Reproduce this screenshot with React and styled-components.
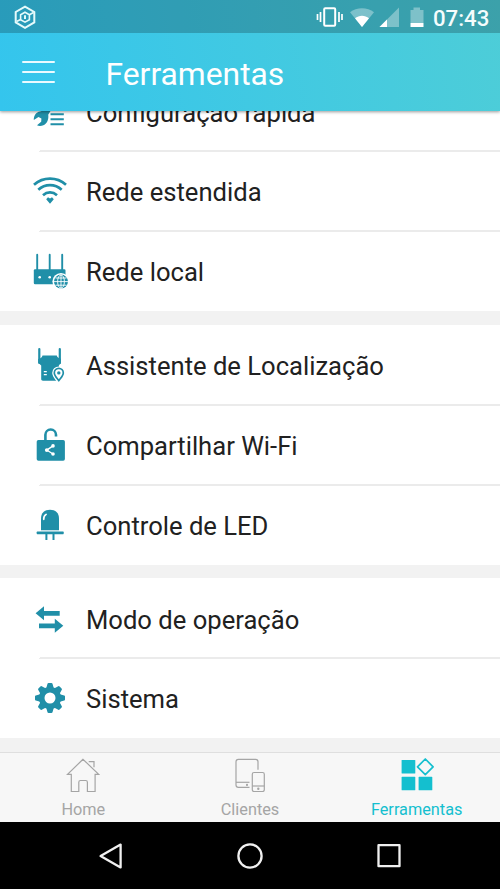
import styled, { createGlobalStyle } from "styled-components"

const groups = [
  [
    { label: "Configuração rápida", Icon: SetupIcon },
    { label: "Rede estendida", Icon: WifiIcon },
    { label: "Rede local", Icon: RouterIcon },
  ],
  [
    { label: "Assistente de Localização", Icon: LocationIcon },
    { label: "Compartilhar Wi-Fi", Icon: ShareIcon },
    { label: "Controle de LED", Icon: LedIcon },
  ],
  [
    { label: "Modo de operação", Icon: ModeIcon },
    { label: "Sistema", Icon: GearIcon },
  ],
]

const tabs = [
  { label: "Home", Icon: HomeIcon },
  { label: "Clientes", Icon: ClientsIcon },
  { label: "Ferramentas", Icon: ToolsIcon, active: true },
]

function App() {
  return (
    <Screen>
      <GlobalStyle />
      <TopArea>
        <StatusBar>
          <AppBadge />
          <StatusIcons />
          <Clock>07:43</Clock>
        </StatusBar>
        <Header>
          <MenuButton aria-label="Menu">
            <span />
            <span />
            <span />
          </MenuButton>
          <Title>Ferramentas</Title>
        </Header>
      </TopArea>

      <List>
        {groups.map((rows) => (
          <Group key={rows[0].label}>
            {rows.map(({ label, Icon }) => (
              <Row key={label}>
                <Icon />
                <RowLabel>{label}</RowLabel>
              </Row>
            ))}
          </Group>
        ))}
      </List>

      <TabBar>
        {tabs.map(({ label, Icon, active }) => (
          <Tab key={label} $active={active}>
            <Icon />
            <TabLabel>{label}</TabLabel>
          </Tab>
        ))}
      </TabBar>

      <NavBar>
        <NavButton aria-label="Voltar">
          <svg width="28" height="28" viewBox="0 0 28 28">
            <path d="M23.6 2.6v22.8L3.6 14z" />
          </svg>
        </NavButton>
        <NavButton aria-label="Início">
          <svg width="28" height="28" viewBox="0 0 28 28">
            <circle cx="14" cy="14" r="11.6" />
          </svg>
        </NavButton>
        <NavButton aria-label="Recentes">
          <svg width="28" height="28" viewBox="0 0 28 28">
            <rect x="3.5" y="3.2" width="21" height="21" />
          </svg>
        </NavButton>
      </NavBar>
    </Screen>
  )
}

function AppBadge() {
  return (
    <svg width="24" height="26" viewBox="0 0 24 26" fill="none" stroke="#e6fafb">
      <path d="M12 2.600 21.300 8v10.400L12 23.800 2.700 18.400V8z" strokeWidth="2" />
      <path d="M12 8.200 16.400 10.700v5L12 18.200l-4.400-2.500v-5z" strokeWidth="1.600" />
      <path d="M3.500 17.500 7.600 15.500M16.400 10.700l4.100-2.200" strokeWidth="1.600" />
      <path d="M12 11.300v3.800" strokeWidth="2" />
    </svg>
  )
}

function StatusIcons() {
  return (
    <StatusSvg width="112" height="24" viewBox="0 0 112 24">
      {/* vibrate */}
      <rect x="8.2" y="3.3" width="11" height="17.4" rx="1" fill="none" stroke="#fff" strokeWidth="2" />
      <path d="M1.500 9v6M4.500 7v10M23 7v10M26 9v6" stroke="#fff" strokeWidth="1.700" />
      {/* wifi */}
      <path d="M34 7.300C40.500 2 51.500 2 58 7.300L46 22z" fill="#fff" opacity=".35" />
      <path d="M39 13.200c4-3.400 10-3.400 14 0L46 22z" fill="#fff" />
      {/* signal */}
      <path d="M83 2.500V22H63.500z" fill="#fff" opacity=".35" />
      <path d="M71 14.500V22h-7.500z" fill="#fff" />
      {/* battery */}
      <path d="M94.500 5h3V2.500h6.500V5h3.500v13h-13z" fill="#fff" opacity=".35" />
      <path d="M94.500 18h13v4h-13z" fill="#fff" />
    </StatusSvg>
  )
}

function SetupIcon() {
  return (
    <RowSvg viewBox="0 0 40 40">
      <path d="M10 20.500 15 19 20 10l4.500 3.500-6.300 10.200c1 6-2.500 11.300-8.200 11.300-1.200 0-2.200-.3-3-.8l4.200-3.400.2-3.400-2.900-1.300-4.700 2.900C3.700 24.500 6 21.200 10 20.500z" />
      <path d="M20.500 23.300h13.300M20.500 28.300h13.300M20.500 33.200h13.300" stroke="currentColor" strokeWidth="2" />
    </RowSvg>
  )
}

function WifiIcon() {
  return (
    <RowSvg viewBox="0 0 40 40">
      <g fill="none" stroke="currentColor" strokeWidth="2.7">
        <path d="M4 13.700c9.200-8.200 22.800-8.200 32 0" />
        <path d="M8.300 18.700c6.700-6.100 16.700-6.100 23.400 0" />
        <path d="M13 24.200c4.200-3.700 9.800-3.700 14 0" />
      </g>
      <path d="M16.200 28.300 18 26.200l2 1.300 2-1.300 1.800 2.100L20 32.700z" />
    </RowSvg>
  )
}

function RouterIcon() {
  return (
    <RowSvg viewBox="0 0 40 40">
      <path d="M7.200 3.700V20M19.700 3.700V20M32.200 3.700V20" stroke="currentColor" strokeWidth="1.9" strokeLinecap="round" />
      <rect x="3.8" y="18.200" width="31.700" height="15" rx="1.300" />
      <circle cx="9.700" cy="26.200" r="1.300" fill="#fff" />
      <circle cx="19.700" cy="26.200" r="1.300" fill="#fff" />
      <circle cx="31" cy="30.600" r="8.600" fill="#fff" />
      <circle cx="31" cy="30.600" r="7" />
      <g fill="none" stroke="#fff" strokeWidth=".9">
        <path d="M24 30.600h14M25.500 27h11M25.500 34.200h11M31 23.600v14" />
        <ellipse cx="31" cy="30.600" rx="3.400" ry="6.600" />
      </g>
    </RowSvg>
  )
}

function LocationIcon() {
  return (
    <RowSvg viewBox="0 0 40 40">
      <path d="M9.300 4v14M29.800 4v14" stroke="currentColor" strokeWidth="2.200" strokeLinecap="round" />
      <path d="M12.500 10.500h14.300c.4 1.800 1.600 2.700 4.100 3.200v4.500l-2 2V34c0 1.200-.7 1.700-1.700 1.700H13c-1.200 0-1.800-.6-1.800-1.700V20.500l-3-2.700v-3.900c2.500-.6 3.900-1.500 4.300-3.400z" />
      <path d="M13.800 26.700h3M13.800 29.600h3" stroke="#fff" strokeWidth="1.300" />
      <path d="M28.800 36.200c-2.500-3.200-4.800-5.600-4.800-8.200a4.800 4.800 0 0 1 9.600 0c0 2.600-2.300 5-4.800 8.200z" fill="#fff" stroke="#fff" strokeWidth="3.6" />
      <path d="M28.800 35.600c-2.300-3-4.500-5.200-4.500-7.700a4.500 4.500 0 0 1 9 0c0 2.500-2.200 4.700-4.500 7.700z" fill="#fff" stroke="currentColor" strokeWidth="1.700" />
      <circle cx="28.800" cy="27.900" r="1.700" />
    </RowSvg>
  )
}

function ShareIcon() {
  return (
    <RowSvg viewBox="0 0 40 40">
      <path d="M15.400 16V9.800a5.300 5.300 0 0 1 10.600 0v1.700" fill="none" stroke="currentColor" strokeWidth="2.600" />
      <rect x="6.700" y="15" width="28.200" height="20.700" rx="1.700" />
      <path d="m23 20.900-6.200 4.200 6.200 3.900" fill="none" stroke="#fff" strokeWidth="1.300" />
      <circle cx="16.800" cy="25.100" r="1.900" fill="#fff" />
      <circle cx="23" cy="20.900" r="1.800" fill="#fff" />
      <circle cx="23" cy="29" r="1.800" fill="#fff" />
    </RowSvg>
  )
}

function LedIcon() {
  return (
    <RowSvg viewBox="0 0 40 40">
      <path d="M11 25.300V13.500c0-5.500 3.600-8.800 9-8.800s9 3.300 9 8.800v11.800z" />
      <rect x="6.700" y="26.600" width="27" height="2.600" rx=".6" />
      <path d="M16.400 29v6M23.500 29v6" stroke="currentColor" strokeWidth="2" />
      <path d="M13.700 14.300c-.1-2.300.8-3.900 2.400-4.900" fill="none" stroke="#fff" strokeWidth="1.700" strokeLinecap="round" />
    </RowSvg>
  )
}

function ModeIcon() {
  return (
    <RowSvg viewBox="0 0 40 40">
      <path d="M5.600 15.300 14 8.300v4.800h15.700v4.700H14v4.500z" />
      <path d="m33.300 27.700-8.500-7v4.800H9v4.800h15.800v4.400z" />
    </RowSvg>
  )
}

function GearIcon() {
  return (
    <RowSvg viewBox="0 0 40 40">
      {[0, 45, 90, 135, 180, 225, 270, 315].map((angle) => (
        <path
          key={angle}
          d="M16 11 17.500 5.800Q17.700 5 18.600 5h2.800Q22.300 5 22.500 5.800L24 11z"
          transform={`rotate(${angle} 20 20)`}
        />
      ))}
      <circle cx="20" cy="20" r="8.300" fill="none" stroke="currentColor" strokeWidth="5.600" />
    </RowSvg>
  )
}

function HomeIcon() {
  return (
    <TabSvg viewBox="0 0 36 36">
      <path d="M18 3.300 2.500 18.300h3.800v17.200h7.500v-9.300q0-1.700 1.700-1.700h5.200q1.700 0 1.700 1.700v9.300h7.700V18.300h3.600z" />
      <path d="M23.700 5.700h5.300v5.500" />
    </TabSvg>
  )
}

function ClientsIcon() {
  return (
    <TabSvg viewBox="0 0 36 36">
      <path d="M17.500 31.400H6.400Q4 31.400 4 29V5.700q0-2.400 2.400-2.400H23.600q2.400 0 2.400 2.400v8" />
      <path d="M4 26.300h13.500" />
      <rect x="20.300" y="16.500" width="12" height="19" rx="1.700" />
      <path d="M20.300 30h12" />
      <circle cx="15" cy="28.900" r=".5" />
      <circle cx="26.300" cy="32.700" r=".6" />
    </TabSvg>
  )
}

function ToolsIcon() {
  return (
    <TabSvg viewBox="0 0 36 36">
      <g fill="currentColor" stroke="none">
        <rect x="2.600" y="4" width="13.700" height="13.500" rx=".6" />
        <rect x="2.600" y="20.800" width="13.700" height="13.500" rx=".6" />
        <rect x="19.600" y="20.800" width="13.700" height="13.500" rx=".6" />
      </g>
      <path d="m26.300 3 7.800 7.800-7.800 7.800-7.800-7.800z" strokeWidth="1.700" strokeLinejoin="round" />
    </TabSvg>
  )
}

const GlobalStyle = createGlobalStyle`
  * {
    box-sizing: border-box;
  }

  body {
    margin: 0;
    background: #000;
    font-family: Roboto, "Liberation Sans", sans-serif;
  }

  button {
    padding: 0;
    border: none;
    background: none;
    font: inherit;
  }
`

const Screen = styled.div`
  display: flex;
  flex-direction: column;
  width: 500px;
  height: 889px;
  overflow: hidden;
  background: #fff;
`

const TopArea = styled.div`
  flex: none;
  height: 111px;
  background: linear-gradient(80deg, #34c5ed, #4dcdd8);
  box-shadow: 0 1px 3px rgba(0, 0, 0, 0.4);
  z-index: 1;
`

const StatusBar = styled.div`
  display: flex;
  align-items: center;
  height: 33px;
  padding: 0 11px 0 13px;
  background: rgba(0, 0, 0, 0.21);
`

const StatusSvg = styled.svg`
  margin-left: auto;
  margin-right: 5px;
`

const Clock = styled.span`
  width: 56px;
  padding-top: 2px;
  font-size: 22.2px;
  font-weight: 500;
  line-height: 30px;
  color: #f4fdfd;
  white-space: nowrap;
`

const Header = styled.header`
  display: flex;
  align-items: center;
  gap: 50.5px;
  height: 78px;
  padding-left: 22px;
`

const MenuButton = styled.button`
  display: flex;
  flex-direction: column;
  gap: 8px;
  width: 33px;

  span {
    height: 2px;
    border-radius: 1px;
    background: #eafaff;
  }
`

const Title = styled.h1`
  margin: 4px 0 0;
  font-size: 31.8px;
  font-weight: 400;
  line-height: 40px;
  color: #fff;
`

/* scrolled to the end, so the first row slides under the header */
const List = styled.main`
  display: flex;
  flex: 1;
  flex-direction: column;
  justify-content: flex-end;
  min-height: 0;
  overflow: hidden;
`

const RowLabel = styled.span`
  flex: 1;
  padding: 2px 0 0 16px;
  font-size: 25.6px;
  line-height: 30px;
  color: #212121;
  white-space: nowrap;
`

const Row = styled.div`
  display: flex;
  align-items: center;
  height: 80px;
  padding-left: 30px;

  /* divider, half in each of the two rows */
  &:not(:last-child) {
    background: linear-gradient(#ebebeb, #ebebeb) 40px 100% / 100% 1px no-repeat;
  }

  & + & {
    padding-bottom: 1px;
    border-top: 1px solid transparent;
    border-image: linear-gradient(90deg, transparent 40px, #ebebeb 40px) 1;
  }
`

const Group = styled.section`
  flex: none;
  background: #fff;
  border-bottom: 14px solid #f2f2f2;

  &:nth-child(2) {
    border-bottom-width: 13px;
  }

  &:nth-child(odd) ${Row}:first-child ${RowLabel} {
    padding-top: 4px;
  }
`

const RowSvg = styled.svg`
  flex: none;
  width: 40px;
  height: 40px;
  color: #208fa8;
  fill: currentColor;
`

const TabBar = styled.nav`
  display: flex;
  flex: none;
  height: 70px;
  border-top: 1px solid #dfdfdf;
  background: #f7f7f7;
`

const Tab = styled.div`
  display: flex;
  flex: 1;
  flex-direction: column;
  align-items: center;
  padding-top: 3px;
  color: ${(props) => (props.$active ? "#14bfcf" : "#a5a5a5")};
`

const TabSvg = styled.svg`
  width: 36px;
  height: 36px;
  fill: none;
  stroke: currentColor;
  stroke-width: 1.2;
`

const TabLabel = styled.span`
  margin-top: 8px;
  font-size: 16.3px;
  line-height: 20px;
`

const NavBar = styled.footer`
  display: flex;
  flex: none;
  height: 67px;
  padding: 0 41.5px;
  background: #000;
`

const NavButton = styled.button`
  display: flex;
  flex: 1;
  align-items: center;
  justify-content: center;

  svg {
    fill: none;
    stroke: #f0f0f0;
    stroke-width: 2.3;
    stroke-linejoin: round;
  }
`

export default App
